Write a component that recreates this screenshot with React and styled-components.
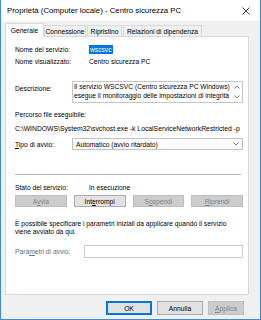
import React from "react";
import styled, { createGlobalStyle } from "styled-components";

const GlobalStyle = createGlobalStyle`
  html, body {
    margin: 0;
    padding: 0;
    background: #ffffff;
  }
  body {
    font-family: "Liberation Sans", Arial, sans-serif;
    font-size: 6.7px;
    color: #000;
  }
`;

const Window = styled.div`
  width: 261px;
  height: 320px;
  box-sizing: border-box;
  border: 1px solid #3b8ddb;
  border-top: none;
  display: flex;
  flex-direction: column;
  background: #f0f0f0;
  overflow: hidden;
`;

const TitleBar = styled.div`
  height: 21px;
  flex: none;
  background: #ffffff;
  display: flex;
  align-items: center;
  justify-content: space-between;
  padding: 0 10px 0 6px;
  font-size: 7.8px;
`;

const Body = styled.div`
  flex: 1;
  display: flex;
  flex-direction: column;
  padding: 2px 11px 0 4px;
`;

const TabStrip = styled.div`
  display: flex;
  align-items: flex-end;
  height: 14px;
  position: relative;
  z-index: 1;
`;

const Tab = styled.div`
  box-sizing: border-box;
  width: ${(p) => p.$w};
  height: ${(p) => (p.$active ? "14px" : "12px")};
  margin-left: ${(p) => p.$ml || "0"};
  border: 1px solid #d9d9d9;
  border-bottom: ${(p) => (p.$active ? "none" : "1px solid #d9d9d9")};
  background: ${(p) => (p.$active ? "#ffffff" : "#f0f0f0")};
  display: flex;
  align-items: center;
  justify-content: center;
  white-space: nowrap;
  padding-bottom: ${(p) => (p.$active ? "1px" : "0")};
`;

const Panel = styled.div`
  box-sizing: border-box;
  height: 259px;
  margin-top: -1px;
  background: #ffffff;
  border: 1px solid #d9d9d9;
  padding: 7px 5px 0 9px;
  display: flex;
  flex-direction: column;
`;

const Row = styled.div`
  display: grid;
  grid-template-columns: ${(p) => p.$label || "74px"} 1fr;
  align-items: ${(p) => p.$align || "center"};
  height: ${(p) => p.$h || "10px"};
  margin-top: ${(p) => p.$mt || "0"};
  color: ${(p) => (p.$disabled ? "#6d6d6d" : "#000")};
`;

const Line = styled.div`
  height: 10px;
  display: flex;
  align-items: center;
  margin-top: ${(p) => p.$mt || "0"};
  font-size: ${(p) => p.$size || "inherit"};
  white-space: nowrap;
`;

const Selected = styled.span`
  background: #0078d7;
  color: #ffffff;
  padding: 0 1px;
  line-height: 9px;
  justify-self: start;
`;

const TopLabel = styled.div`
  align-self: start;
  padding-top: 4px;
`;

const TextArea = styled.div`
  box-sizing: border-box;
  height: 22px;
  border: 1px solid #c5c5c5;
  display: flex;
  overflow: hidden;
`;

const AreaText = styled.div`
  flex: 1;
  padding: 1px 0 0 1px;
  line-height: 8.5px;
  white-space: nowrap;
  overflow: hidden;
`;

const ScrollCol = styled.div`
  width: 10px;
  flex: none;
  display: flex;
  flex-direction: column;
  align-items: center;
  justify-content: space-between;
  padding: 3px 0 3px;
`;

const Select = styled.div`
  box-sizing: border-box;
  height: 12px;
  border: 1px solid #c2c2c2;
  background: #fcfcfc;
  display: flex;
  align-items: center;
  justify-content: space-between;
  padding: 0 3px 0 3px;
`;

const Separator = styled.div`
  height: 1px;
  background: #b4b4b4;
  margin: 24px 2px 0 0;
`;

const ButtonRow = styled.div`
  display: grid;
  grid-template-columns: repeat(4, 1fr);
  gap: 7px;
  margin-top: 3px;
`;

const Button = styled.div`
  box-sizing: border-box;
  height: ${(p) => p.$h || "12px"};
  width: ${(p) => p.$w || "auto"};
  display: flex;
  align-items: center;
  justify-content: center;
  background: ${(p) => (p.$disabled ? "#cccccc" : "#e1e1e1")};
  border: ${(p) =>
    p.$default ? "2px solid #0078d7" : p.$disabled ? "1px solid #bfbfbf" : "1px solid #adadad"};
  color: ${(p) => (p.$disabled ? "#838383" : "#000")};
`;

const Para = styled.div`
  margin-top: 13px;
  line-height: 8px;
`;

const Input = styled.div`
  box-sizing: border-box;
  height: 13px;
  border: 1px solid #cccccc;
  background: #ffffff;
`;

const Footer = styled.div`
  display: flex;
  justify-content: flex-end;
  gap: 5px;
  padding: 6px 5px 0 0;
`;

const Key = styled.span`
  text-decoration: underline;
  text-underline-offset: 1px;
`;

function Chevron({ up }) {
  return (
    <svg width="6" height="4" viewBox="0 0 6 4">
      <path
        d={up ? "M0.5 3.5 L3 1 L5.5 3.5" : "M0.5 0.5 L3 3 L5.5 0.5"}
        fill="none"
        stroke="#606060"
        strokeWidth="0.8"
      />
    </svg>
  );
}

function CloseIcon() {
  return (
    <svg width="8" height="8" viewBox="0 0 8 8">
      <path d="M0.5 0.5 L7.5 7.5 M7.5 0.5 L0.5 7.5" stroke="#111" strokeWidth="0.8" />
    </svg>
  );
}

export default function App() {
  return (
    <>
      <GlobalStyle />
      <Window>
        <TitleBar>
          <span>Proprietà (Computer locale) - Centro sicurezza PC</span>
          <CloseIcon />
        </TitleBar>
        <Body>
          <TabStrip>
            <Tab $active $w="39px">Generale</Tab>
            <Tab $w="42px">Connessione</Tab>
            <Tab $w="35px" $ml="1px">Ripristino</Tab>
            <Tab $w="79px" $ml="1px">Relazioni di dipendenza</Tab>
          </TabStrip>
          <Panel>
            <Row>
              <span>Nome del servizio:</span>
              <Selected>wscsvc</Selected>
            </Row>
            <Row $mt="2px">
              <span>Nome visualizzato:</span>
              <span>Centro sicurezza PC</span>
            </Row>
            <Row $label="57px" $h="22px" $mt="15px" $align="stretch">
              <TopLabel>Descrizione:</TopLabel>
              <TextArea>
                <AreaText>
                  Il servizio WSCSVC (Centro sicurezza PC Windows)
                  <br />
                  esegue il monitoraggio delle impostazioni di integrità
                </AreaText>
                <ScrollCol>
                  <Chevron up />
                  <Chevron />
                </ScrollCol>
              </TextArea>
            </Row>
            <Line $mt="6px">Percorso file eseguibile:</Line>
            <Line $mt="4px" $size="6.8px">
              C:\WINDOWS\System32\svchost.exe -k LocalServiceNetworkRestricted -p
            </Line>
            <Row $label="57px" $h="12px" $mt="5px">
              <span>
                <Key>T</Key>ipo di avvio:
              </span>
              <Select>
                <span>Automatico (avvio ritardato)</span>
                <Chevron />
              </Select>
            </Row>
            <Separator />
            <Row $mt="7px">
              <span>Stato del servizio:</span>
              <span>In esecuzione</span>
            </Row>
            <ButtonRow>
              <Button $disabled>
                A<Key>v</Key>via
              </Button>
              <Button>
                Int<Key>e</Key>rrompi
              </Button>
              <Button $disabled>
                S<Key>o</Key>spendi
              </Button>
              <Button $disabled>
                <Key>R</Key>iprendi
              </Button>
            </ButtonRow>
            <Para>
              È possibile specificare i parametri iniziali da applicare quando il servizio
              <br />
              viene avviato da qui.
            </Para>
            <Row $label="69px" $h="13px" $mt="9px" $disabled>
              <span>
                Para<Key>m</Key>etri di avvio:
              </span>
              <Input />
            </Row>
          </Panel>
          <Footer>
            <Button $default $w="46px" $h="14px">
              OK
            </Button>
            <Button $w="46px" $h="14px">
              Annulla
            </Button>
            <Button $disabled $w="36px" $h="14px">
              <Key>A</Key>pplica
            </Button>
          </Footer>
        </Body>
      </Window>
    </>
  );
}
